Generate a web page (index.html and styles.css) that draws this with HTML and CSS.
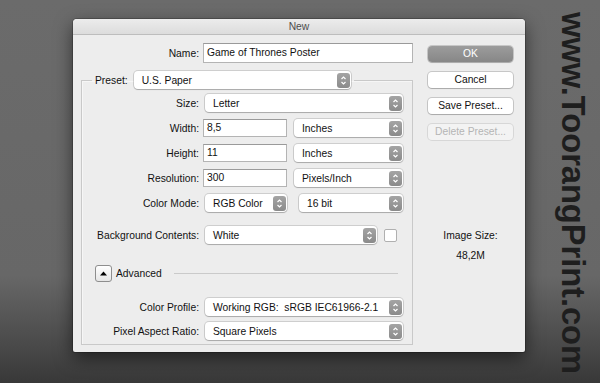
FILE: index.html
```html
<!DOCTYPE html>
<html lang="en">
<head>
    <meta charset="UTF-8">
    <meta name="viewport" content="width=device-width, initial-scale=1.0">
    <title>New</title>
    <link rel="stylesheet" href="styles.css">
</head>
<body>
    <div class="dialog">
        <div class="titlebar">New</div>
        <div class="dialog-body">
            <div class="main">
                <div class="name-row">
                    <span class="lbl">Name:</span>
                    <div class="field">Game of Thrones Poster</div>
                </div>

                <fieldset class="preset-box">
                    <legend class="preset-legend">
                        <span class="lbl">Preset:</span>
                        <div class="popup preset-popup"><span>U.S. Paper</span><span class="stepper"></span></div>
                    </legend>

                    <div class="row row-size">
                        <span class="lbl">Size:</span>
                        <div class="popup"><span>Letter</span><span class="stepper"></span></div>
                    </div>
                    <div class="row">
                        <span class="lbl">Width:</span>
                        <div class="pair">
                            <div class="field short">8,5</div>
                            <div class="popup"><span>Inches</span><span class="stepper"></span></div>
                        </div>
                    </div>
                    <div class="row">
                        <span class="lbl">Height:</span>
                        <div class="pair">
                            <div class="field short">11</div>
                            <div class="popup"><span>Inches</span><span class="stepper"></span></div>
                        </div>
                    </div>
                    <div class="row">
                        <span class="lbl">Resolution:</span>
                        <div class="pair">
                            <div class="field short">300</div>
                            <div class="popup"><span>Pixels/Inch</span><span class="stepper"></span></div>
                        </div>
                    </div>
                    <div class="row">
                        <span class="lbl">Color Mode:</span>
                        <div class="pair pair-mode">
                            <div class="popup mode-popup"><span>RGB Color</span><span class="stepper"></span></div>
                            <div class="popup"><span>16 bit</span><span class="stepper"></span></div>
                        </div>
                    </div>
                    <div class="row row-bg">
                        <span class="lbl">Background Contents:</span>
                        <div class="pair pair-bg">
                            <div class="popup"><span>White</span><span class="stepper"></span></div>
                            <span class="checkbox"></span>
                        </div>
                    </div>

                    <div class="advanced">
                        <span class="disclosure"></span>
                        <span class="adv-label">Advanced</span>
                        <span class="adv-line"></span>
                    </div>

                    <div class="row row-profile">
                        <span class="lbl">Color Profile:</span>
                        <div class="popup"><span>Working RGB:&nbsp; sRGB IEC61966-2.1</span><span class="stepper"></span></div>
                    </div>
                    <div class="row row-pixel">
                        <span class="lbl">Pixel Aspect Ratio:</span>
                        <div class="popup"><span>Square Pixels</span><span class="stepper"></span></div>
                    </div>
                </fieldset>
            </div>

            <div class="side">
                <div class="btn btn-default">OK</div>
                <div class="btn">Cancel</div>
                <div class="btn">Save Preset...</div>
                <div class="btn btn-disabled">Delete Preset...</div>
                <div class="image-size">
                    <div>Image Size:</div>
                    <div class="image-size-value">48,2M</div>
                </div>
            </div>
        </div>
    </div>

    <div class="watermark">www.ToorangPrint.com</div>
</body>
</html>
```

FILE: styles.css
```css
/* Base */
body {
    margin: 0;
    height: 383px;
    overflow: hidden;
    display: flex;
    align-items: flex-start;
    padding: 12px 0 0 73px;
    box-sizing: border-box;
    font-family: "Liberation Sans", Arial, sans-serif;
    font-size: 10.3px;
    color: #111;
    background: linear-gradient(to bottom, #6b6b6b 0%, #676767 72%, #4a4a4a 90%, #383838 100%);
}

/* Dialog window */
.dialog {
    width: 452px;
    height: 333px;
    margin-top: 7px;
    background: #ededed;
    border-radius: 4px 4px 2px 2px;
    box-shadow: 0 6px 18px rgba(0, 0, 0, 0.55), 0 0 0 1px rgba(0, 0, 0, 0.2);
    display: flex;
    flex-direction: column;
    overflow: hidden;
}

.titlebar {
    height: 15px;
    line-height: 15px;
    text-align: center;
    color: #4d4d4d;
    background: linear-gradient(to bottom, #ececec, #dcdcdc);
    border-bottom: 1px solid #bdbdbd;
}

.dialog-body {
    display: flex;
    padding-top: 8px;
}

/* Left column: form */
.main {
    width: 332px;
    padding-left: 8px;
}

.lbl {
    text-align: right;
    white-space: nowrap;
}

.name-row {
    display: grid;
    grid-template-columns: 118px 1fr;
    column-gap: 4px;
    align-items: center;
    height: 20px;
}

.field {
    height: 20px;
    line-height: 18px;
    box-sizing: border-box;
    padding-left: 3px;
    background: #fff;
    border: 1px solid #b4b4b4;
    border-top-color: #9a9a9a;
    white-space: nowrap;
}

.field.short {
    width: 84px;
    height: 18px;
    line-height: 16px;
    flex: none;
}

/* Preset group box */
.preset-box {
    margin: 8px 0 0;
    padding: 5px 9px 4px 0;
    min-width: 0;
    border: 1px solid #c9c9c9;
    box-shadow: inset 1px 1px 0 #f6f6f6;
}

.preset-legend {
    display: flex;
    align-items: center;
    gap: 6px;
    margin-left: 10px;
    padding: 0 3px;
    height: 18px;
}

.preset-popup {
    width: 217px;
}

/* Popup menus */
.popup {
    height: 18px;
    box-sizing: border-box;
    display: flex;
    align-items: center;
    justify-content: space-between;
    padding: 0 1px 0 8px;
    background: #fff;
    border-radius: 4px;
    box-shadow: 0 0 0 1px rgba(0, 0, 0, 0.13), 0 1px 1px rgba(0, 0, 0, 0.18);
    white-space: nowrap;
    flex: 1;
}

.stepper {
    width: 13px;
    height: 15px;
    border-radius: 3px;
    background:
        url("data:image/svg+xml;utf8,<svg xmlns='http://www.w3.org/2000/svg' width='13' height='15'><path d='M4.5 6 L6.5 4 L8.5 6 M4.5 9 L6.5 11 L8.5 9' fill='none' stroke='white' stroke-width='1.2'/></svg>") center no-repeat,
        linear-gradient(to bottom, #a4a4a4, #8b8b8b);
}

/* Form rows */
.row {
    display: grid;
    grid-template-columns: 117px 1fr;
    column-gap: 4px;
    align-items: center;
    height: 18px;
    margin-top: 7px;
}

.row .popup {
    margin-left: 2px;
}

.row-size {
    margin-top: 0;
}

.pair {
    display: flex;
    align-items: center;
    gap: 5px;
}

.pair-mode {
    gap: 10px;
}

.mode-popup {
    flex: none;
    width: 82px;
}

.pair-bg {
    gap: 7px;
    padding-right: 6px;
}

.checkbox {
    width: 11px;
    height: 11px;
    background: #fff;
    border: 1px solid #b0b0b0;
    border-radius: 2px;
    flex: none;
}

.row-bg {
    margin-top: 14px;
}

/* Advanced disclosure */
.advanced {
    display: flex;
    align-items: center;
    height: 18px;
    margin: 20px 0 0 13px;
}

.disclosure {
    width: 15px;
    height: 15px;
    border: 1px solid #8e8e8e;
    border-radius: 3px;
    background:
        url("data:image/svg+xml;utf8,<svg xmlns='http://www.w3.org/2000/svg' width='15' height='15'><path d='M4 9.5 L7.5 5.5 L11 9.5 Z' fill='black'/></svg>") center no-repeat,
        linear-gradient(to bottom, #ffffff, #e6e6e6);
}

.adv-label {
    margin-left: 4px;
}

.adv-line {
    flex: 1;
    height: 1px;
    margin: 1px 5px 0 12px;
    background: #cacaca;
}

.row-profile {
    margin-top: 16px;
}

.row-pixel {
    margin-top: 6px;
}

/* Right column: buttons */
.side {
    width: 85px;
    margin: 3px 0 0 15px;
    display: flex;
    flex-direction: column;
    gap: 10px;
}

.btn {
    height: 16px;
    line-height: 15px;
    box-sizing: border-box;
    text-align: center;
    background: #fff;
    border-radius: 4px;
    box-shadow: 0 0 0 1px rgba(0, 0, 0, 0.16), 0 1px 1px rgba(0, 0, 0, 0.15);
}

.btn-default {
    color: #fff;
    background: linear-gradient(to bottom, #9c9c9c, #878787);
}

.btn-disabled {
    color: #b5b5b5;
    background: #f3f3f3;
    box-shadow: 0 0 0 1px rgba(0, 0, 0, 0.09);
}

.image-size {
    margin-top: 79px;
    text-align: center;
    line-height: 13px;
}

.image-size-value {
    margin-top: 7px;
}

/* Watermark */
.watermark {
    writing-mode: vertical-rl;
    margin-left: 32px;
    width: 32px;
    line-height: 32px;
    font-size: 32.6px;
    font-weight: bold;
    color: #1e1e1e;
    white-space: nowrap;
}
```
